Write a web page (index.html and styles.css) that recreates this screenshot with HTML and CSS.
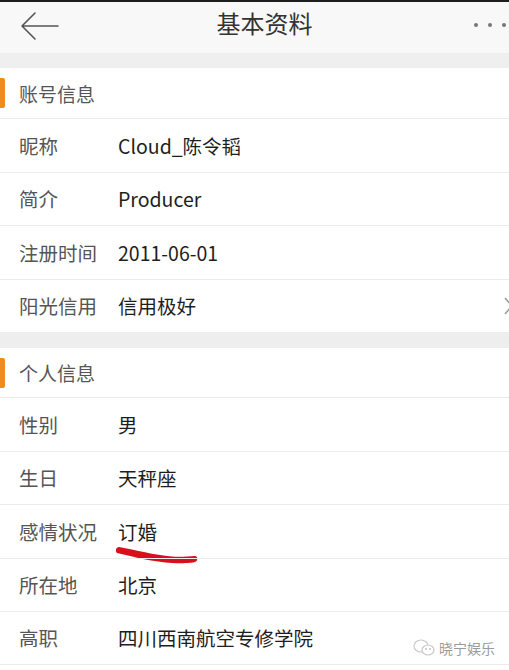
FILE: index.html
```html
<!DOCTYPE html>
<html lang="zh">
<head>
<meta charset="utf-8">
<link rel="stylesheet" href="styles.css">
</head>
<body>
<div class="page">
  <div class="topline"></div>
  <header class="header">
    <svg class="back" width="40" height="30" viewBox="0 0 40 30"><path d="M15 2 L2 15 L15 28 M2 15 H38" fill="none" stroke="#555" stroke-width="1.6" stroke-linecap="round" stroke-linejoin="round"/></svg>
    <h1 class="title">基本资料</h1>
    <div class="dots"><span></span><span></span><span></span></div>
  </header>
  <div class="gap gap-top"></div>
  <section class="group">
    <div class="sec-head"><span class="bar"></span>账号信息</div>
    <div class="row"><span class="label">昵称</span><span class="value">Cloud_陈令韬</span></div>
    <div class="row"><span class="label">简介</span><span class="value">Producer</span></div>
    <div class="row"><span class="label">注册时间</span><span class="value">2011-06-01</span></div>
    <div class="row"><span class="label">阳光信用</span><span class="value">信用极好</span>
      <svg class="chev" width="8" height="18" viewBox="0 0 8 18"><path d="M1 1 L8 9 L1 17" fill="none" stroke="#999" stroke-width="1.5"/></svg>
    </div>
  </section>
  <div class="gap"></div>
  <section class="group">
    <div class="sec-head sec-head2"><span class="bar"></span>个人信息</div>
    <div class="row"><span class="label">性别</span><span class="value">男</span></div>
    <div class="row"><span class="label">生日</span><span class="value">天秤座</span></div>
    <div class="row mark-row"><span class="label">感情状况</span><span class="value">订婚</span>
      <svg class="redline" width="86" height="24" viewBox="0 0 86 24"><path d="M5 2 C 2 2, 1 6, 3 8 C 20 12, 40 17, 58 18 C 70 18.5, 78 18, 81 17 C 84 16, 84 11, 81 11 C 74 11.5, 66 12, 58 11.5 C 40 10, 22 5, 5 2 Z" fill="#d6101c"/></svg>
    </div>
    <div class="row"><span class="label">所在地</span><span class="value">北京</span></div>
    <div class="row last"><span class="label">高职</span><span class="value">四川西南航空专修学院</span>
      <div class="watermark">
        <svg width="22" height="18" viewBox="0 0 22 18"><ellipse cx="8" cy="7" rx="7" ry="6" fill="none" stroke="#c8c8c8" stroke-width="1.2"/><ellipse cx="15" cy="11" rx="6" ry="5" fill="#fff" stroke="#c8c8c8" stroke-width="1.2"/><circle cx="13" cy="10" r="0.9" fill="#bbb"/><circle cx="17" cy="10" r="0.9" fill="#bbb"/></svg>
        <span>晓宁娱乐</span>
      </div>
    </div>
  </section>
</div>
</body>
</html>
```
FILE: styles.css
```css
* { box-sizing: border-box; margin: 0; padding: 0; }
html, body { background: #fff; }
body {
  width: 509px;
  height: 670px;
  overflow: hidden;
  font-family: "Noto Sans CJK SC", "Noto Sans", sans-serif;
}
.page { width: 509px; }
.topline { height: 2px; background: #1e1e1e; }
.header {
  height: 51px;
  background: #f8f8f8;
  display: flex;
  align-items: center;
  position: relative;
  padding: 0 0 0 20px;
}
.back { display: block; margin-top: -3px; }
.title {
  position: absolute;
  left: 20px; right: 0; top: 4px;
  text-align: center;
  font-size: 24px;
  font-weight: 400;
  color: #333;
  line-height: 34px;
  pointer-events: none;
}
.dots {
  margin-left: auto;
  display: flex;
  gap: 10px;
  margin-right: 3px;
  margin-top: -6px;
}
.dots span { width: 4px; height: 4px; border-radius: 50%; background: #777; display: block; }
.gap { height: 16px; background: #eeeeee; }
.gap-top { height: 15px; background: #efefef; }
.group { background: #fff; }
.sec-head {
  height: 50px;
  display: flex;
  align-items: center;
  padding-left: 19px;
  font-size: 19px;
  color: #555;
  position: relative;
}
.sec-head2 { height: 49px; }
.bar {
  position: absolute;
  left: 0; top: 10px;
  width: 5px; height: 30px;
  background: #f08c1e;
  border-radius: 0 2px 2px 0;
}
.row {
  height: 53.5px;
  border-top: 1px solid #ebebeb;
  display: flex;
  align-items: center;
  padding-left: 19px;
  font-size: 19.5px;
  position: relative;
}
.row.last { border-bottom: 1px solid #ebebeb; }
.label { width: 99px; color: #555; flex: none; }
.value { color: #1e1e1e; }
.chev {
  position: absolute;
  right: -3px;
  top: 17px;
  display: block;
}
.redline {
  position: absolute;
  left: 114px;
  top: 40px;
  width: 86px;
  height: 24px;
}
.watermark {
  position: absolute;
  right: 14px;
  top: 27px;
  display: flex;
  align-items: center;
  gap: 4px;
  color: #9a9a9a;
  font-size: 14px;
  line-height: 18px;
}
.watermark svg { display: block; }
```
